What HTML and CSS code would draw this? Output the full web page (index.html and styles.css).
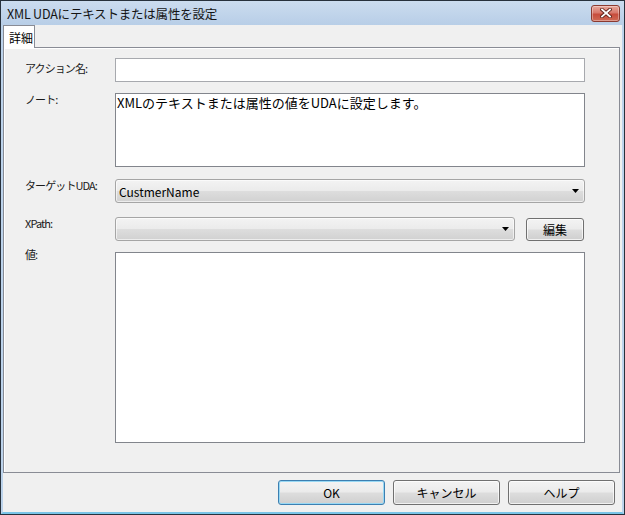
FILE: index.html
```html
<!DOCTYPE html>
<html lang="ja">
<head>
    <meta charset="UTF-8">
    <title>XML UDAにテキストまたは属性を設定</title>
    <link rel="stylesheet" href="styles.css">
</head>
<body>
    <div class="window">
        <div class="titlebar">
            <span class="title">XML UDAにテキストまたは属性を設定</span>
            <button class="close" type="button">
                <svg width="12" height="10" viewBox="0 0 12 10">
                    <path d="M2 1.5L10 8.5M10 1.5L2 8.5" stroke="#5e2119" stroke-width="3.6" stroke-linecap="square"/>
                    <path d="M2 1.5L10 8.5M10 1.5L2 8.5" stroke="#ffffff" stroke-width="1.8" stroke-linecap="square"/>
                </svg>
            </button>
        </div>

        <div class="frame">
            <div class="tabs">
                <div class="tab">詳細</div>
            </div>

            <div class="panel">
                <div class="form">
                    <label class="label label-first">アクション名:</label>
                    <input class="textbox" type="text" value="">

                    <label class="label">ノート:</label>
                    <textarea class="textarea note">XMLのテキストまたは属性の値をUDAに設定します。</textarea>

                    <label class="label row-target">ターゲットUDA:</label>
                    <div class="combo row-target">
                        <span>CustmerName</span>
                        <svg class="arrow" width="7" height="4" viewBox="0 0 7 4"><path d="M0 0h7L3.5 4z" fill="#000"/></svg>
                    </div>

                    <label class="label row-xpath">XPath:</label>
                    <div class="xpath row-xpath">
                        <div class="combo">
                            <span></span>
                            <svg class="arrow" width="7" height="4" viewBox="0 0 7 4"><path d="M0 0h7L3.5 4z" fill="#000"/></svg>
                        </div>
                        <button class="btn btn-edit" type="button">編集</button>
                    </div>

                    <label class="label label-value">値:</label>
                    <textarea class="textarea value"></textarea>
                </div>
            </div>

            <div class="footer">
                <button class="btn btn-default" type="button">OK</button>
                <button class="btn" type="button">キャンセル</button>
                <button class="btn" type="button">ヘルプ</button>
            </div>
        </div>
    </div>
</body>
</html>
```

FILE: styles.css
```css
* {
    box-sizing: border-box;
}

body {
    margin: 0;
    background-color: #ffffff;
    font-family: "Noto Sans CJK JP", "Noto Sans", sans-serif;
    font-size: 12px;
    color: #000;
}

.window {
    width: 625px;
    height: 515px;
    border: 1px solid #27313c;
    display: flex;
    flex-direction: column;
    background-color: #bcd3eb;
}

.titlebar {
    height: 24px;
    display: flex;
    align-items: center;
    justify-content: space-between;
    padding: 0 4px 0 6px;
    background: linear-gradient(#cbdcef, #b8cee7);
}

.title {
    font-size: 12.5px;
    color: #141414;
    letter-spacing: -0.2px;
}

.close {
    width: 29px;
    height: 17px;
    padding: 0;
    display: flex;
    align-items: center;
    justify-content: center;
    border: 1px solid #8b3a30;
    border-radius: 3px;
    background: linear-gradient(#e7a89c 0%, #d8786b 45%, #c74c3c 55%, #cf6a55 100%);
    box-shadow: inset 0 0 0 1px rgba(255,255,255,0.35);
}

.frame {
    flex: 1;
    display: flex;
    flex-direction: column;
    background-color: #f0f0f0;
    border-left: 2px solid #bcd3eb;
    border-right: 2px solid #bcd3eb;
    border-bottom: 2px solid #79c4e7;
    padding-right: 2px;
}

.tabs {
    height: 22px;
    display: flex;
    align-items: flex-end;
}

.tab {
    position: relative;
    z-index: 1;
    width: 32px;
    height: 23px;
    margin-bottom: -1px;
    padding: 3px 0 0 5px;
    background-color: #ffffff;
    border: 1px solid #898c95;
    border-bottom: none;
    font-size: 12px;
}

.panel {
    height: 426px;
    border: 1px solid #898c95;
    box-shadow: inset 1px 1px 0 #ffffff;
    padding: 10px 34px 0 21px;
}

.form {
    display: grid;
    grid-template-columns: 90px 1fr;
    row-gap: 11px;
}

.label {
    font-size: 11px;
    line-height: 12px;
    letter-spacing: -0.9px;
    color: #1a1a1a;
}

.label-first {
    padding-top: 4px;
}

.label-value {
    margin-top: -4px;
}

.row-target {
    margin-top: 1px;
}

.row-xpath {
    margin-top: 3px;
}

.textbox {
    height: 24px;
    border: 1px solid #a7a9ae;
    background-color: #ffffff;
    padding: 0 2px;
    font: inherit;
    outline: none;
}

.textarea {
    display: block;
    border: 1px solid #82858c;
    background-color: #ffffff;
    padding: 0 1px;
    resize: none;
    overflow: hidden;
    font-family: inherit;
    font-size: 13px;
    line-height: 17px;
    outline: none;
}

.note {
    height: 74px;
}

.value {
    height: 191px;
}

.combo {
    height: 24px;
    display: flex;
    align-items: center;
    justify-content: space-between;
    padding: 0 5px 0 3px;
    border: 1px solid #a5a5a5;
    border-radius: 3px;
    background: linear-gradient(#f3f3f3 0%, #ebebeb 48%, #dddddd 52%, #d1d1d1 100%);
    box-shadow: inset 0 0 0 1px rgba(255,255,255,0.6);
    font-size: 12px;
}

.arrow {
    flex: none;
}

.xpath {
    display: flex;
    align-items: flex-start;
    gap: 11px;
}

.xpath .combo {
    flex: 1;
}

.btn {
    width: 107px;
    height: 25px;
    padding: 0;
    border: 1px solid #707070;
    border-radius: 3px;
    background: linear-gradient(#f3f3f3 0%, #ebebeb 48%, #dddddd 52%, #cfcfcf 100%);
    box-shadow: inset 0 0 0 1px rgba(255,255,255,0.7);
    font-family: inherit;
    font-size: 12px;
    color: #000;
}

.btn-edit {
    width: 58px;
    height: 23px;
    margin-top: 1px;
    margin-right: 1px;
}

.btn-default {
    border-color: #3c7fb1;
    box-shadow: inset 0 0 0 1px #98d8f4;
}

.footer {
    flex: 1;
    display: flex;
    justify-content: flex-end;
    gap: 8px;
    padding: 7px 5px 0 0;
}
```
